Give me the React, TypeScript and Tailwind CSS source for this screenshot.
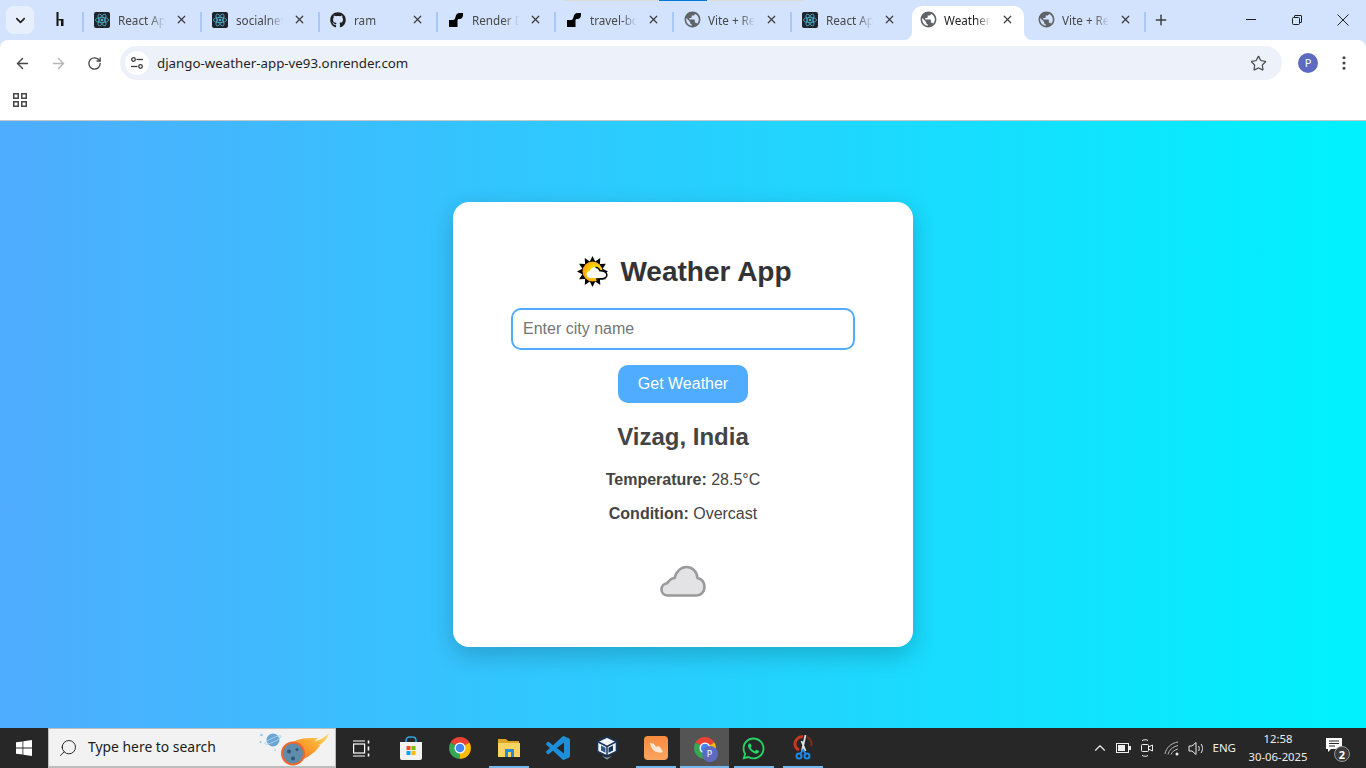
import type { ReactNode } from 'react';
import { ArrowLeft, ArrowRight, ChevronDown, ChevronUp, Plus, RotateCw, Star, X, Search, MoreVertical } from 'lucide-react';
import { FaGithub, FaWhatsapp } from 'react-icons/fa';
import { MdPublic } from 'react-icons/md';

type TabItem = { id: number; title: string; icon: 'react' | 'github' | 'render' | 'globe'; active?: boolean };

const tabs: TabItem[] = [
  { id: 1, title: 'React App', icon: 'react' },
  { id: 2, title: 'socialnetwork', icon: 'react' },
  { id: 3, title: 'ram', icon: 'github' },
  { id: 4, title: 'Render Dashboard', icon: 'render' },
  { id: 5, title: 'travel-booking', icon: 'render' },
  { id: 6, title: 'Vite + React', icon: 'globe' },
  { id: 7, title: 'React App', icon: 'react' },
  { id: 8, title: 'Weather App', icon: 'globe', active: true },
  { id: 9, title: 'Vite + React', icon: 'globe' },
];

function ReactIcon() {
  return (
    <svg width="16" height="16" viewBox="0 0 16 16">
      <rect width="16" height="16" rx="2" fill="#20232a" />
      <g fill="none" stroke="#4fb6cf" strokeWidth="0.8">
        <ellipse cx="8" cy="8" rx="6.6" ry="2.6" />
        <ellipse cx="8" cy="8" rx="6.6" ry="2.6" transform="rotate(60 8 8)" />
        <ellipse cx="8" cy="8" rx="6.6" ry="2.6" transform="rotate(120 8 8)" />
      </g>
      <circle cx="8" cy="8" r="1.3" fill="#4fb6cf" />
    </svg>
  );
}

function RenderIcon() {
  return (
    <svg width="16" height="16" viewBox="0 0 16 16">
      <path d="M1 8h4c1.500 0 2-1 2.500-3C8 2.500 9.500 1 11.500 1H15v2c0 2.500-1.500 4-3.500 4H11c-1 0-1.500.5-1.500 1.500V15H1z" fill="#000" />
    </svg>
  );
}

function TabFavicon({ icon }: { icon: TabItem['icon'] }) {
  if (icon === 'react') return <ReactIcon />;
  if (icon === 'github') return <FaGithub size={16} className="text-[#1f1f1f]" />;
  if (icon === 'render') return <RenderIcon />;
  return <MdPublic size={19} className="text-[#5f6368] -m-[1.5px]" />;
}

function Tab({ tab, hideSeparator }: { tab: TabItem; hideSeparator: boolean }) {
  return (
    <div className="relative flex h-[34px] w-[118px] shrink-0 items-center self-end">
      {!hideSeparator && <span className="absolute left-[-1px] top-[6px] h-[20px] w-[2px] bg-[#a8c7fa]" />}
      {tab.active && (
        <>
          <span className="absolute bottom-0 left-[3px] right-[3px] top-0 rounded-t-[10px] bg-white" />
          <span className="absolute bottom-0 left-[-5px] h-2 w-2 bg-white">
            <span className="block h-2 w-2 rounded-br-lg bg-[#d3e3fd]" />
          </span>
          <span className="absolute bottom-0 right-[-5px] h-2 w-2 bg-white">
            <span className="block h-2 w-2 rounded-bl-lg bg-[#d3e3fd]" />
          </span>
        </>
      )}
      <div className={`relative flex w-full -translate-y-[3px] items-center pl-[11px] ${tab.active ? 'text-[#1f1f1f]' : 'text-[#474747]'}`}>
        <span className="flex h-4 w-4 shrink-0 items-center justify-center">
          <TabFavicon icon={tab.icon} />
        </span>
        <span className="ml-[8px] w-[47px] overflow-hidden whitespace-nowrap pt-px text-[11.7px] [mask-image:linear-gradient(to_right,black_68%,transparent)]">
          {tab.title}
        </span>
        <X size={13} strokeWidth={2.2} className="ml-[10px] shrink-0 text-[#3c3c3c]" />
      </div>
    </div>
  );
}

function TabStrip() {
  return (
    <div className="relative flex h-10 items-start bg-[#d3e3fd]">
      <span className="absolute left-[563px] top-0 h-px w-[241px] bg-[#dcdcdc]" />
      <span className="absolute left-[659px] top-0 h-px w-[48px] bg-[#0078d4]" />
      <div className="ml-[6px] mt-[6px] flex h-[28px] w-[28px] shrink-0 items-center justify-center rounded-lg bg-[#e7effd]">
        <ChevronDown size={15} strokeWidth={2.6} className="text-[#1f1f1f]" />
      </div>
      <div className="flex h-[34px] w-[49px] shrink-0 items-center justify-center self-end -translate-y-[3px]">
        <svg width="16" height="16" viewBox="0 0 16 16" className="ml-[3px]">
          <rect x="4.500" y="0" width="2" height="14" fill="#111" />
          <path d="M6.500 7h5v7H9V8.500H6.500z" fill="#111" />
        </svg>
      </div>
      <div className="flex h-10 items-end">
        {tabs.map((tab, i) => (
          <Tab key={tab.id} tab={tab} hideSeparator={tab.active === true || tabs[i - 1]?.active === true} />
        ))}
      </div>
      <div className="relative -ml-px flex h-10 items-start">
        <span className="mt-[12px] h-[20px] w-[2px] bg-[#a8c7fa]" />
        <Plus size={16} strokeWidth={2.2} className="ml-[7px] mt-[12px] text-[#3c3c3c]" />
      </div>
      <div className="ml-auto flex h-10 items-center text-[#1f1f1f]">
        <span className="flex w-[46px] justify-center">
          <svg width="10" height="10" viewBox="0 0 10 10" stroke="currentColor" strokeWidth="1">
            <path d="M0 4.500h10" />
          </svg>
        </span>
        <span className="flex w-[46px] justify-center">
          <svg width="10" height="10" viewBox="0 0 10 10" fill="none" stroke="currentColor" strokeWidth="1">
            <rect x="0.500" y="2.500" width="7" height="7" rx="1" />
            <path d="M2.500 2.500V1a.5.5 0 0 1 .5-.5h6a.5.5 0 0 1 .5.5v6a.5.5 0 0 1-.5.5H7.500" />
          </svg>
        </span>
        <span className="flex w-[46px] justify-center">
          <svg width="12" height="12" viewBox="0 0 12 12" fill="none" stroke="currentColor" strokeWidth="1">
            <path d="M0.500 0.500l11 11M11.500 0.500l-11 11" />
          </svg>
        </span>
      </div>
    </div>
  );
}

function SiteSettingsIcon() {
  return (
    <svg width="14" height="14" viewBox="0 0 14 14" fill="none" stroke="#3c3c3c" strokeWidth="1.300">
      <circle cx="3.500" cy="3.500" r="1.800" />
      <path d="M6.500 3.500H13" />
      <circle cx="10.500" cy="10.500" r="1.800" />
      <path d="M1 10.500h6.500" />
    </svg>
  );
}

function Toolbar() {
  return (
    <div className="rounded-t-lg bg-white">
      <div className="flex h-10 items-end">
        <div className="flex h-[34px] w-[120px] shrink-0 items-center">
          <ArrowLeft size={17} strokeWidth={2} className="ml-[14px] text-[#474747]" />
          <ArrowRight size={17} strokeWidth={2} className="ml-[19px] text-[#b5b5b5]" />
          <RotateCw size={15} strokeWidth={2.100} className="ml-[20px] text-[#474747]" />
        </div>
        <div className="flex h-[34px] w-[1162px] shrink-0 items-center rounded-full bg-[#edf2fa]">
          <span className="ml-[5px] flex h-[24px] w-[24px] items-center justify-center rounded-full bg-white">
            <SiteSettingsIcon />
          </span>
          <span className="ml-[8px] whitespace-nowrap pt-px text-[13.300px] text-[#1f1f1f]">django-weather-app-ve93.onrender.com</span>
          <Star size={17} strokeWidth={1.700} className="ml-auto mr-[15px] text-[#474747]" />
        </div>
        <div className="flex h-[34px] flex-1 items-center">
          <span className="ml-[16px] flex h-5 w-5 items-center justify-center rounded-full bg-[#5c6bc0] text-[11px] text-white">P</span>
          <MoreVertical size={18} strokeWidth={2.200} className="ml-[17px] text-[#474747]" />
        </div>
      </div>
      <div className="flex h-[41px] items-center border-b border-[#c7c7c7] pl-[13px]">
        <svg width="14" height="14" viewBox="0 0 14 14" fill="none" stroke="#474747" strokeWidth="1.500">
          <rect x="0.750" y="0.750" width="4.500" height="4.500" />
          <rect x="8.750" y="0.750" width="4.500" height="4.500" />
          <rect x="0.750" y="8.750" width="4.500" height="4.500" />
          <rect x="8.750" y="8.750" width="4.500" height="4.500" />
        </svg>
      </div>
    </div>
  );
}

function SunCloudIcon() {
  const points: string[] = [];
  for (let i = 0; i < 24; i++) {
    const r = i % 2 === 0 ? 15.500 : 10.500;
    const a = (i * Math.PI) / 12;
    points.push(`${(15.500 + r * Math.cos(a)).toFixed(1)},${(15.500 + r * Math.sin(a)).toFixed(1)}`);
  }
  return (
    <svg width="33" height="32" viewBox="0 0 33 32">
      <defs>
        <radialGradient id="sun" cx="0.650" cy="0.500" r="0.650">
          <stop offset="0.300" stopColor="#ffe000" />
          <stop offset="1" stopColor="#ff9f00" />
        </radialGradient>
      </defs>
      <polygon points={points.join(' ')} fill="#000" />
      <circle cx="15.500" cy="15.500" r="10" fill="url(#sun)" />
      <path d="M13.500 22c-2.500 0-4-1.700-4-3.600 0-2 1.500-3.400 3.300-3.500.8-2.500 2.900-4 5.300-3.700 2.300.2 3.900 1.700 4.500 3.500 3-.3 6.400 1.400 6.400 4 0 2.300-2 3.300-4 3.300z" fill="#fff" />
      <path d="M18.500 11.200c2.300.2 3.900 1.700 4.500 3.500 3-.3 6.900 1.400 6.900 4.200 0 2.300-2.400 4-4.500 4H19" fill="none" stroke="#000" strokeWidth="1.500" />
    </svg>
  );
}

function CloudIcon() {
  return (
    <svg width="46" height="32" viewBox="0 0 46 32">
      <path
        d="M8 30.500C4 30.500 1.500 27.800 1.500 24.500c0-3.400 2.500-6 5.800-6.300C9 15.300 11.500 13.200 14.500 13 16.500 6.500 21 2 26.500 2 32.500 2 37 6.500 37.500 13c4.300 1 7 4.500 7 9 0 5-3.700 8.500-8 8.500z"
        fill="#e3e3e5"
        stroke="#999"
        strokeWidth="2.600"
        strokeLinejoin="round"
      />
    </svg>
  );
}

function WeatherCard() {
  return (
    <div className="flex h-[445px] w-[460px] flex-col items-center rounded-[16px] bg-white pt-[53px] text-[16px] text-[#444] shadow-[0_8px_24px_rgba(0,0,0,0.2)]">
      <h1 className="flex h-[34px] items-center pl-[3px] text-[28px] font-bold leading-[34px] text-[#333]">
        <SunCloudIcon />
        <span className="ml-[10px]">Weather App</span>
      </h1>
      <input
        readOnly
        placeholder="Enter city name"
        className="mt-[19px] h-[42px] w-[344px] rounded-[10px] border-2 border-[#4facfe] px-[10px] text-[16px] outline-none placeholder:text-[#757575]"
      />
      <button className="mt-[15px] h-[38px] w-[130px] rounded-[10px] bg-[#4facfe] text-[16px] text-white">Get Weather</button>
      <h2 className="mt-[20px] text-[24px] font-bold leading-[28px]">Vizag, India</h2>
      <p className="mt-[20px] leading-[18px]"><strong>Temperature:</strong> 28.5°C</p>
      <p className="mt-[16px] leading-[18px]"><strong>Condition:</strong> Overcast</p>
      <div className="mt-[42px]">
        <CloudIcon />
      </div>
    </div>
  );
}

function ChromeIcon({ size = 24 }: { size?: number }) {
  return (
    <svg width={size} height={size} viewBox="0 0 48 48">
      <path d="M24 24L5 13A22 22 0 0 1 43 13Z" fill="#ea4335" />
      <path d="M24 24L43 13A22 22 0 0 1 24 46Z" fill="#fbbc04" />
      <path d="M24 24L24 46A22 22 0 0 1 5 13Z" fill="#34a853" />
      <circle cx="24" cy="24" r="11" fill="#fff" />
      <circle cx="24" cy="24" r="8.500" fill="#4285f4" />
    </svg>
  );
}

function StoreIcon() {
  return (
    <svg width="24" height="24" viewBox="0 0 24 24">
      <path d="M7 7V4.500C7 2.500 8.500 1 10.500 1h3C15.500 1 17 2.500 17 4.500V7" fill="none" stroke="#2aa4e0" strokeWidth="1.600" />
      <path d="M1 6h22v16a2 2 0 0 1-2 2H3a2 2 0 0 1-2-2z" fill="#f3f3f3" />
      <rect x="7.500" y="10" width="4" height="4" fill="#f25022" />
      <rect x="12.500" y="10" width="4" height="4" fill="#7fba00" />
      <rect x="7.500" y="15" width="4" height="4" fill="#00a4ef" />
      <rect x="12.500" y="15" width="4" height="4" fill="#ffb900" />
    </svg>
  );
}

function FolderIcon() {
  return (
    <svg width="22" height="20" viewBox="0 0 22 20">
      <path d="M0 1h8l2 2h11v3H0z" fill="#e0a526" />
      <path d="M0 5h22v14H0z" fill="#fcd462" />
      <rect x="7" y="11" width="9" height="3" fill="#2a8ad4" />
      <rect x="7" y="11" width="3" height="8" fill="#2a8ad4" />
      <rect x="13" y="11" width="3" height="8" fill="#2a8ad4" />
    </svg>
  );
}

function VsCodeIcon() {
  return (
    <svg width="24" height="24" viewBox="0 0 24 24" fill="#1c8fd8">
      <path d="M23.150 2.587L18.210.21a1.494 1.494 0 0 0-1.705.29l-9.460 8.630-4.120-3.128a.999.999 0 0 0-1.276.057L.327 7.261A1 1 0 0 0 .326 8.740L3.899 12 .326 15.260a1 1 0 0 0 .001 1.479L1.650 17.940a.999.999 0 0 0 1.276.057l4.120-3.128 9.460 8.630a1.492 1.492 0 0 0 1.704.29l4.942-2.377A1.500 1.500 0 0 0 24 20.060V3.939a1.500 1.500 0 0 0-.85-1.352zm-5.146 14.861L10.826 12l7.178-5.448v10.896z" />
    </svg>
  );
}

function VirtualBoxIcon() {
  return (
    <svg width="22" height="25" viewBox="0 0 22 25">
      <path d="M11 1l9.500 4.500v10L11 20l-9.500-4.500v-10z" fill="#f2f5f8" stroke="#1a3558" strokeWidth="1.600" strokeLinejoin="round" />
      <path d="M11 10.500L1.500 5.500M11 10.500l9.500-5M11 10.500V20" stroke="#1a3558" strokeWidth="1.500" />
      <path d="M5 9.500l4.500 2.300v5L5 14.500z" fill="#2b5a8b" />
      <path d="M17 9.500l-4.500 2.300v5l4.500-2.300z" fill="#16375c" />
      <path d="M6 20l5 3.500 5-3.500-5 1.800z" fill="#9aa7b3" />
    </svg>
  );
}

function OrangeAppIcon() {
  return (
    <svg width="24" height="24" viewBox="0 0 24 24">
      <defs>
        <linearGradient id="orange" x1="0" y1="0" x2="0" y2="1">
          <stop offset="0" stopColor="#f98b3f" />
          <stop offset="1" stopColor="#fba560" />
        </linearGradient>
      </defs>
      <rect width="24" height="24" rx="4" fill="url(#orange)" />
      <path d="M6 7c3 0 5 2 6 4 1-1 3-1 4 0l3 5c-2 1-4 1-6 0-3 0-6-4-7-9z" fill="#fde7d3" />
      <path d="M9 6l2 5-1 0z" fill="#fff" />
    </svg>
  );
}

function SnipIcon() {
  return (
    <svg width="20" height="26" viewBox="0 0 20 26">
      <path d="M10 1.500C5 1.500 2 5 2 9c0 3 2 5 4 6" fill="none" stroke="#c8381f" strokeWidth="3" />
      <path d="M14 2c4 2 5 6 4 9" fill="none" stroke="#7a2a1c" strokeWidth="2.500" />
      <path d="M12.500 0L9 16M8.500 6l4 10" stroke="#e2e2e2" strokeWidth="1.800" />
      <circle cx="6" cy="21" r="2.500" fill="none" stroke="#1e88e5" strokeWidth="2" />
      <circle cx="14" cy="21" r="2.500" fill="none" stroke="#1e88e5" strokeWidth="2" />
      <path d="M7.500 18.500l2.500-3.500 2.500 3.500" fill="none" stroke="#1e88e5" strokeWidth="1.800" />
    </svg>
  );
}

function TaskViewIcon() {
  return (
    <svg width="17" height="17" viewBox="0 0 17 17" fill="none" stroke="#fff" strokeWidth="1.200">
      <path d="M0 1h12M0 16h12" />
      <rect x="0.600" y="4" width="11" height="9" />
      <path d="M15.500 0.500v3M15.500 6.500v4M15.500 13.500v3" strokeWidth="1.600" />
    </svg>
  );
}

function MeteorArt() {
  return (
    <svg width="72" height="38" viewBox="0 0 72 38">
      <defs>
        <linearGradient id="flame" x1="0" y1="1" x2="1" y2="0">
          <stop offset="0" stopColor="#f0662a" />
          <stop offset="0.600" stopColor="#fbab33" />
          <stop offset="1" stopColor="#fde06a" />
        </linearGradient>
      </defs>
      <path d="M30 17C38 8 52 9 60 9c-1 1-2 2-4 3 5 0 10-3 15-8-2 7-7 11-11 12 1 0 2 0 3-1-4 7-13 14-22 17z" fill="url(#flame)" />
      <circle cx="35" cy="24.500" r="12" fill="#f0662a" />
      <circle cx="35" cy="24.500" r="10" fill="#5f8cab" />
      <circle cx="31" cy="22.500" r="2" fill="#2f5672" />
      <circle cx="39" cy="20.500" r="1.500" fill="#2f5672" />
      <circle cx="35" cy="29.500" r="2" fill="#2f5672" />
      <circle cx="15" cy="11" r="6.500" fill="#6ba6d4" />
      <ellipse cx="15" cy="11" rx="9" ry="2" fill="none" stroke="#a9d2ee" strokeWidth="0.800" transform="rotate(-25 15 11)" />
      <circle cx="3.500" cy="6" r="1.200" fill="#8fc4e8" />
      <circle cx="2.500" cy="13" r="1" fill="#8fc4e8" />
      <circle cx="17" cy="21" r="0.800" fill="#8fc4e8" />
    </svg>
  );
}

function StartIcon() {
  return (
    <svg width="16" height="16" viewBox="0 0 16 16" fill="#fff">
      <path d="M0 2.300l6.500-.9v6.200H0zM7.300 1.300L16 0v7.600H7.300zM0 8.400h6.500v6.200L0 13.700zM7.300 8.400H16V16l-8.700-1.200z" />
    </svg>
  );
}

function TaskbarSlot({ children, underline, active }: { children: ReactNode; underline?: boolean; active?: boolean }) {
  return (
    <div className={`relative flex h-10 w-[49px] shrink-0 items-center justify-center ${active ? 'bg-[#545454]' : ''}`}>
      {children}
      {underline && <span className="absolute bottom-0 left-[5px] right-[4px] h-[2px] bg-[#76b9ed]" />}
      {active && <span className="absolute bottom-0 left-0 right-0 h-[2px] bg-[#76b9ed]" />}
    </div>
  );
}

function TrayIcons() {
  return (
    <div className="flex items-center text-[#eee]">
      <ChevronUp size={18} strokeWidth={1.500} />
      <svg width="15" height="10" viewBox="0 0 15 10" className="ml-[7px]" fill="none" stroke="#eee">
        <rect x="0.500" y="0.500" width="12" height="9" />
        <rect x="2" y="2" width="7" height="6" fill="#eee" stroke="none" />
        <rect x="13" y="3" width="2" height="4" fill="#eee" stroke="none" />
      </svg>
      <svg width="13" height="18" viewBox="0 0 13 18" className="ml-[9px]" fill="none" stroke="#eee">
        <path d="M2 1.500c2-1 5-1 6 0M2 16.500c2 1 5 1 6 0" />
        <rect x="1.500" y="5.500" width="7" height="7" rx="1" />
        <path d="M8.500 8l4-2v6l-4-2" />
      </svg>
      <svg width="16" height="15" viewBox="0 0 16 15" className="ml-[11px]" fill="none" stroke="#bbb">
        <path d="M1 13C2 7 7 2 14 1" />
        <path d="M4 13.500C5 9.500 8 6 14 4.500" />
        <path d="M7 13.500C8 11 10 9 14 8" />
        <circle cx="13" cy="13" r="1.500" fill="#eee" stroke="none" />
      </svg>
      <svg width="17" height="15" viewBox="0 0 17 15" className="ml-[8px]" fill="none" stroke="#eee">
        <path d="M1 5h3l4-3.500v12L4 10H1z" />
        <path d="M10.500 5c1 1.500 1 3.500 0 5M13 3c2 2.500 2 6.500 0 9" />
      </svg>
    </div>
  );
}

function Taskbar() {
  return (
    <div className="flex h-10 shrink-0 items-center bg-[#272727] text-white">
      <div className="flex w-[48px] shrink-0 justify-center">
        <StartIcon />
      </div>
      <div className="flex h-10 w-[288px] shrink-0 items-center border border-b-2 border-[#bdbdbd] bg-[#f2f2f2] pl-[9px] text-[#1b1b1b]">
        <Search size={20} strokeWidth={1.100} className="-scale-x-100" />
        <span className="ml-[10px] whitespace-nowrap text-[13.900px]">Type here to search</span>
        <span className="ml-auto mr-[5px]">
          <MeteorArt />
        </span>
      </div>
      <div className="ml-px flex">
        <TaskbarSlot><TaskViewIcon /></TaskbarSlot>
        <TaskbarSlot><StoreIcon /></TaskbarSlot>
        <TaskbarSlot><ChromeIcon /></TaskbarSlot>
        <TaskbarSlot underline><FolderIcon /></TaskbarSlot>
        <TaskbarSlot><VsCodeIcon /></TaskbarSlot>
        <TaskbarSlot><VirtualBoxIcon /></TaskbarSlot>
        <TaskbarSlot underline><OrangeAppIcon /></TaskbarSlot>
        <TaskbarSlot active>
          <span className="relative">
            <ChromeIcon />
            <span className="absolute -bottom-[2px] -right-[1px] flex h-4 w-4 items-center justify-center rounded-full bg-[#5c6bc0] text-[9px] text-white">P</span>
          </span>
        </TaskbarSlot>
        <TaskbarSlot underline><FaWhatsapp size={25} className="text-[#25d366]" /></TaskbarSlot>
        <TaskbarSlot underline><SnipIcon /></TaskbarSlot>
      </div>
      <div className="ml-auto flex items-center">
        <TrayIcons />
        <span className="ml-[7px] text-[11.500px] text-[#eee]">ENG</span>
        <div className="ml-[13px] flex w-[58px] flex-col items-center text-[11.300px] leading-[18px] text-[#eee]">
          <span>12:58</span>
          <span className="whitespace-nowrap">30-06-2025</span>
        </div>
        <div className="relative ml-[18px] mr-[17px] h-[24px] w-[24px]">
          <svg width="18" height="17" viewBox="0 0 18 17" className="mt-[1px]">
            <path d="M1 1h16v11H6l-3 3v-3H1z" fill="#fff" />
            <path d="M4 4h10M4 6.500h10M4 9h6" stroke="#272727" />
          </svg>
          <span className="absolute -bottom-[2px] -right-[1px] flex h-[16px] w-[16px] items-center justify-center rounded-full border border-[#999] bg-[#3b3b3b] text-[11px] font-bold leading-none text-white">2</span>
        </div>
      </div>
    </div>
  );
}

export default function App() {
  return (
    <div className="flex h-screen w-full flex-col overflow-hidden bg-[#d3e3fd] font-['Noto_Sans','Open_Sans',sans-serif]">
      <TabStrip />
      <Toolbar />
      <main className="flex flex-1 items-center justify-center bg-[linear-gradient(to_right,#4facfe,#00f2fe)] font-['Liberation_Sans',Arial,sans-serif]">
        <WeatherCard />
      </main>
      <Taskbar />
    </div>
  );
}
